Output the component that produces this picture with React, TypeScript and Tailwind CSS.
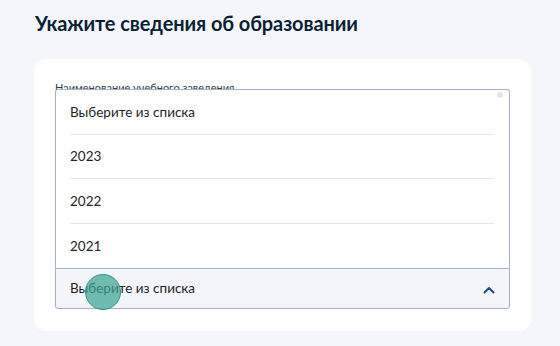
import React from "react";

const items = ["Выберите из списка", "2023", "2022", "2021"];

export default function App() {
  return (
    <div
      className="w-[560px] h-[346px] overflow-hidden bg-[#f4f6fb] pl-[34px] pr-[29px] pt-[9px]"
      style={{ fontFamily: "Lato, 'Noto Sans', sans-serif" }}
    >
      <h1 className="pl-[1px] text-[20px] leading-[28px] font-bold text-[#0b1f33] tracking-[-0.1px]">
        Укажите сведения об образовании
      </h1>
      <div className="mt-[22px] bg-white rounded-[12px] px-[21px] pt-[22px] pb-[22px]">
        <div className="text-[11px] leading-[14px] text-[#333c45]">Наименование учебного заведения</div>
        <div className="relative mt-[173px]">
          <div className="absolute bottom-full left-0 right-0 bg-white border border-b-0 border-[#a4b3cd] rounded-t-[3px]">
            <div className="absolute right-[6px] top-[2px] w-[6px] h-[6px] rounded-full bg-[#e1e4ea]" />
            {items.map((t, i) => (
              <div key={t} className="pl-[14px] pr-[15px]">
                <div
                  className={
                    "h-[44.5px] flex items-center text-[13.5px] text-[#1f2428] " +
                    (i < items.length - 1 ? "border-b border-[#e3e6ea]" : "")
                  }
                >
                  {t}
                </div>
              </div>
            ))}
          </div>
          <div className="h-[41px] flex items-center justify-between bg-[#f3f5fa] border border-[#a4b3cd] rounded-b-[3px] pl-[14px] pr-[14px]">
            <span className="text-[13.5px] text-[#1f2428]">Выберите из списка</span>
            <svg width="12" height="8" viewBox="0 0 12 8" className="mt-[2px]">
              <path d="M1.5 6.5 L6 2 L10.5 6.5" fill="none" stroke="#1d4a8f" strokeWidth="2" strokeLinecap="round" strokeLinejoin="round" />
            </svg>
          </div>
          <div className="absolute left-[30px] top-[6px] w-[36px] h-[36px] rounded-full bg-[rgba(60,165,145,0.72)] border-[1.5px] border-[#2a9a86]" />
        </div>
      </div>
    </div>
  );
}
